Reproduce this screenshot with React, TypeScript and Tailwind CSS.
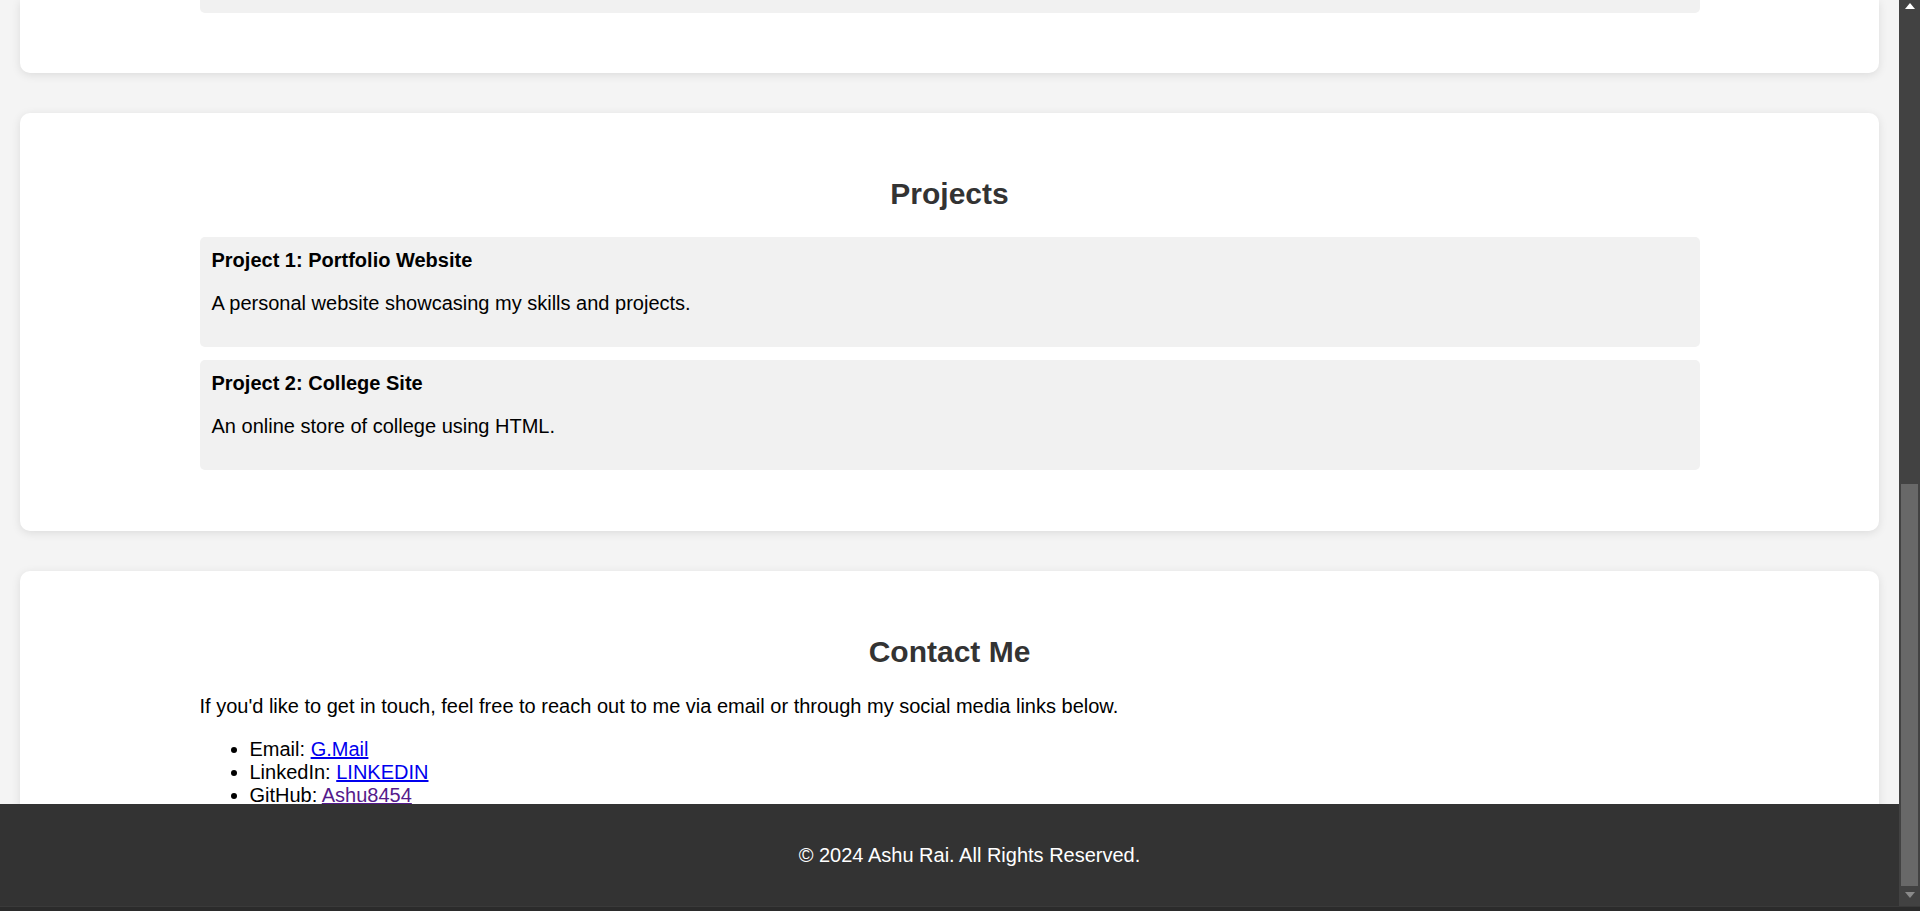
import React from "react";

const font = { fontFamily: '"Liberation Sans", Arial, sans-serif' };

function ProjectBox({ title, desc }: { title: string; desc: string }) {
  return (
    <div className="h-[110px] rounded-[5px] bg-[#f1f1f1] p-[12px]">
      <h3 className="m-0 mb-[20px] text-[20px] font-bold leading-[23px] text-black">{title}</h3>
      <p className="m-0 text-[20px] leading-[23px] text-black">{desc}</p>
    </div>
  );
}

export default function App() {
  return (
    <div className="flex h-[911px] w-full flex-col overflow-hidden bg-[#2b2b2b]" style={font}>
      <div className="flex h-[906px] w-full">
        <div className="flex w-[1899px] flex-col">
          <div className="flex h-[804px] flex-col overflow-hidden bg-[#f4f4f4]">
            {/* tail of previous section */}
            <div className="mx-[20px] h-[73px] shrink-0 rounded-b-[10px] bg-white shadow-[0_2px_10px_rgba(0,0,0,0.1)]">
              <div className="mx-auto h-[13px] w-[1500px] rounded-b-[5px] bg-[#f1f1f1]" />
            </div>

            {/* Projects */}
            <section className="mx-[20px] mt-[40px] h-[418px] shrink-0 rounded-[10px] bg-white pt-[64px] shadow-[0_2px_10px_rgba(0,0,0,0.1)]">
              <div className="mx-auto w-[1500px]">
                <h2 className="m-0 mb-[26px] text-center text-[30px] font-bold leading-[34px] text-[#333]">Projects</h2>
                <div className="flex flex-col gap-[13px]">
                  <ProjectBox title="Project 1: Portfolio Website" desc="A personal website showcasing my skills and projects." />
                  <ProjectBox title="Project 2: College Site" desc="An online store of college using HTML." />
                </div>
              </div>
            </section>

            {/* Contact */}
            <section className="mx-[20px] mt-[40px] h-[300px] shrink-0 rounded-[10px] bg-white pt-[64px] shadow-[0_2px_10px_rgba(0,0,0,0.1)]">
              <div className="mx-auto w-[1500px]">
                <h2 className="m-0 mb-[26px] text-center text-[30px] font-bold leading-[34px] text-[#333]">Contact Me</h2>
                <p className="m-0 mb-[20px] text-[20px] leading-[23px] text-black">
                  If you'd like to get in touch, feel free to reach out to me via email or through my social media links below.
                </p>
                <ul className="m-0 list-disc pl-[50px] text-[20px] leading-[23px] text-black">
                  <li>
                    Email: <a href="#" className="text-[#0000ee] underline">G.Mail</a>
                  </li>
                  <li>
                    LinkedIn: <a href="#" className="text-[#0000ee] underline">LINKEDIN</a>
                  </li>
                  <li>
                    GitHub: <a href="#" className="text-[#551a8b] underline">Ashu8454</a>
                  </li>
                </ul>
              </div>
            </section>
          </div>
          <footer className="flex h-[102px] items-center justify-center bg-[#333] pl-[40px]">
            <p className="m-0 text-center text-[20px] leading-[23px] text-white">© 2024 Ashu Rai. All Rights Reserved.</p>
          </footer>
        </div>

        {/* scrollbar */}
        <div className="flex w-[21px] flex-col bg-[#424242]">
          <div className="flex h-[17px] justify-center pt-[3px]">
            <svg width="10" height="6" viewBox="0 0 10 6">
              <polygon points="5,0 10,6 0,6" fill="#ffffff" />
            </svg>
          </div>
          <div className="h-[467px]" />
          <div className="ml-[2px] h-[402px] w-[17px] bg-[#686868]" />
          <div className="flex h-[20px] justify-center pt-[6px]">
            <svg width="10" height="6" viewBox="0 0 10 6">
              <polygon points="0,0 10,0 5,6" fill="#8a8a8a" />
            </svg>
          </div>
        </div>
      </div>
      <div className="h-[5px] w-full border-t border-[#3a3a3a] bg-[#2b2b2b]" />
    </div>
  );
}
